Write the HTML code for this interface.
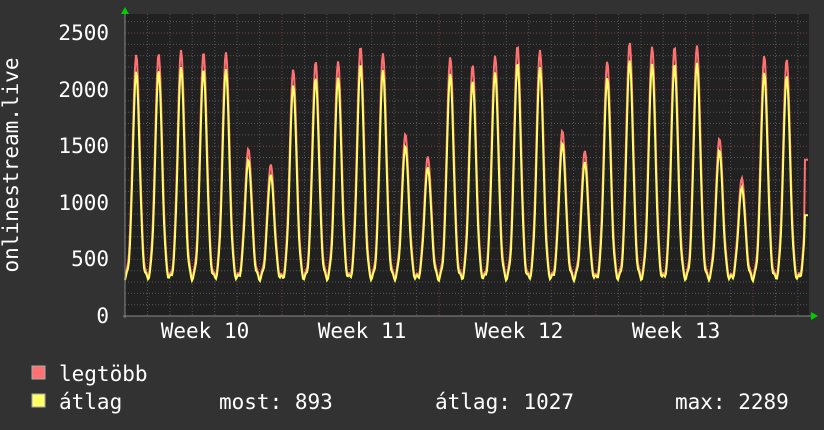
<!DOCTYPE html><html><head><style>
body{margin:0;background:#323232;width:824px;height:430px;overflow:hidden;font-family:"DejaVu Sans Mono","Liberation Mono",monospace;color:#fff}
</style></head><body>
<svg id="s" width="824" height="430" xmlns="http://www.w3.org/2000/svg" style="position:absolute;left:0;top:0">
<rect x="125" y="14" width="684" height="302" fill="#212121"/>
<g id="grid"></g>
<polyline id="mx" fill="none" stroke="#ff7070" stroke-width="2"/>
<polyline id="av" fill="none" stroke="#ffff66" stroke-width="2"/>
<line x1="123" y1="316" x2="812" y2="316" stroke="#888" stroke-width="1"/>
<line x1="125" y1="12" x2="125" y2="318" stroke="#888" stroke-width="1"/>
<polygon points="121,14 129,14 125,7" fill="#00cc00"/>
<polygon points="811,312 811,320 818,316" fill="#00cc00"/>
<g font-size="21" fill="#fff" font-family="DejaVu Sans Mono,Liberation Mono,monospace" text-anchor="end">
<text x="109" y="40">2500</text><text x="109" y="97">2000</text><text x="109" y="153">1500</text><text x="109" y="210">1000</text><text x="109" y="266">500</text><text x="109" y="323">0</text>
</g>
<g font-size="21" fill="#fff" font-family="DejaVu Sans Mono,Liberation Mono,monospace" text-anchor="middle">
<text x="205" y="338">Week 10</text><text x="362" y="338">Week 11</text><text x="519" y="338">Week 12</text><text x="676" y="338">Week 13</text>
</g>
<text transform="translate(18,165) rotate(-90)" font-size="21" fill="#fff" text-anchor="middle" font-family="DejaVu Sans Mono,Liberation Mono,monospace">onlinestream.live</text>
<rect x="32" y="366" width="13" height="13" fill="#ff7070" stroke="#aaa" stroke-width="1"/>
<rect x="32" y="394" width="13" height="13" fill="#ffff66" stroke="#aaa" stroke-width="1"/>
<g font-size="21" fill="#fff" font-family="DejaVu Sans Mono,Liberation Mono,monospace">
<text x="59" y="381">legtöbb</text>
<text x="59" y="409">átlag</text>
<text x="219" y="409">most: 893</text>
<text x="435" y="409">átlag: 1027</text>
<text x="675" y="409">max: 2289</text>
</g>
</svg>
<script>
var g=document.getElementById('grid'),h='';
function Y(v){return 316-v*0.1132;}
for(var v=100;v<=2600;v+=100){var y=Y(v);if(y<14)break;var maj=v%500==0;
h+='<line x1="125" x2="809" y1="'+y+'" y2="'+y+'" stroke="'+(maj?'#7a3a3a':'#555')+'" stroke-dasharray="1,2"/>';}
for(var i=1;i<31;i++){var x=125+i*22.43;if(x>809)break;var maj=i%7==0;
h+='<line y1="14" y2="316" x1="'+x+'" x2="'+x+'" stroke="'+(maj?'#7a3a3a':'#555')+'" stroke-dasharray="1,2"/>';}
g.innerHTML=h;
var peaks=[2310,2320,2350,2330,2330,1480,1340,2180,2250,2250,2380,2320,1610,1410,2290,2220,2300,2390,2350,1640,1460,2250,2420,2380,2380,2390,1570,1220,2300,2270,1400];
var m='',a='';
for(var x=125;x<=808;x++){var d=(x-125)/22.43;var i=Math.floor(d),p=d-i;var pk=peaks[i]||1400;
var f=Math.exp(-Math.pow((p-0.5)/0.22,2));var base=340+25*Math.sin(x*1.3);
var mv=base+(pk-base)*f;if(x>804)mv=1380;
var av=base-10+(pk*0.94-base)*Math.pow(f,1.1);if(x>804)av=890;
m+=x+','+Y(mv).toFixed(1)+' ';a+=x+','+Y(av).toFixed(1)+' ';}
document.getElementById('mx').setAttribute('points',m);
document.getElementById('av').setAttribute('points',a);
</script>
</body></html>
